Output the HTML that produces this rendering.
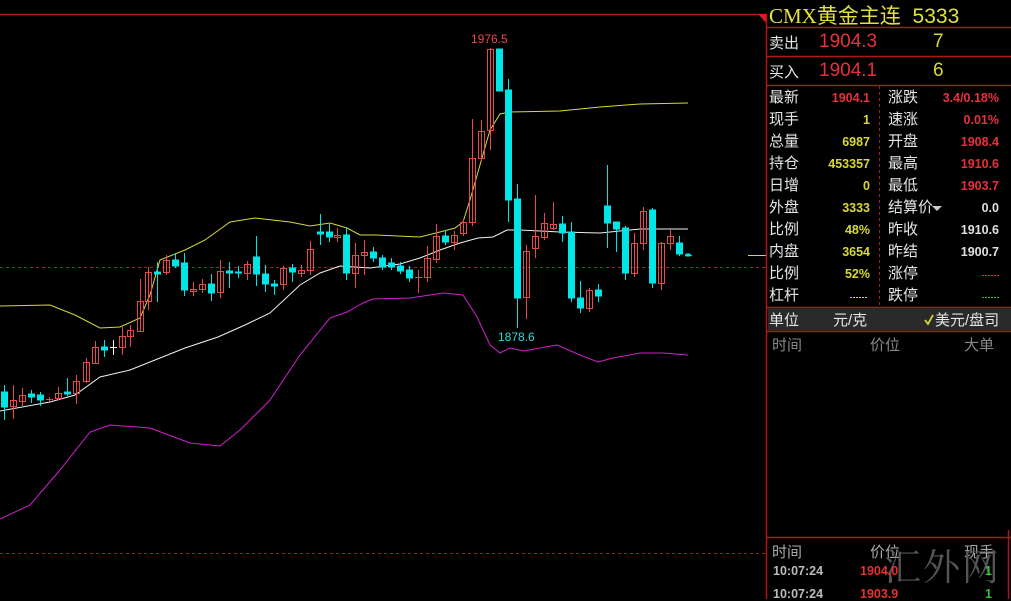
<!DOCTYPE html>
<html><head><meta charset="utf-8"><style>
body{margin:0;background:#000;width:1011px;height:599px;overflow:hidden;position:relative;font-family:"Liberation Sans","Noto Sans CJK SC",sans-serif}
.p{position:absolute;white-space:nowrap}
.l{color:#e6e6e6;font-size:15px}
.v{font-weight:bold;font-size:12.5px;text-align:right}
.y{color:#d8d838}.r{color:#e8303a}.w{color:#e0e0e0}.g{color:#888}
</style></head><body>
<svg width="1011" height="599" style="position:absolute;left:0;top:0">
<line x1="0" y1="14.5" x2="767" y2="14.5" stroke="#b01818" stroke-width="1.5"/>
<polygon points="758,14 767,14 767,24" fill="#d02020"/>
<line x1="0" y1="267.5" x2="766" y2="267.5" stroke="#9a2424" stroke-dasharray="3,3"/>
<line x1="0" y1="553.5" x2="766" y2="553.5" stroke="#9a2424" stroke-dasharray="3,3"/>
<line x1="748" y1="255.5" x2="766" y2="255.5" stroke="#d8d838"/>
<polyline fill="none" stroke="#d8d838" points="0,306 50,305 75,315 100,328 120,327 140,318 150,295 160,260 185,250 205,240 230,222 255,218 290,222 310,226 330,223 347,228 360,235 375,235 420,237 440,232 455,228 463,222 470,200 480,165 490,130 500,114 510,112 560,111 600,107 640,104 688,103"/>
<polyline fill="none" stroke="#f0f0f0" points="0,411 50,402 75,395 100,377 130,370 160,358 185,348 218,337 245,325 270,313 300,285 320,273 340,266 370,268 400,264 420,258 440,250 460,243 478,238 493,237 507,230 520,230 560,232 600,233 640,229 688,229"/>
<polyline fill="none" stroke="#d020d0" points="0,519 30,505 60,470 90,432 110,425 150,428 190,443 220,446 240,430 270,400 300,355 330,318 347,312 363,303 373,299 410,298 443,293 463,295 477,317 490,345 500,353 510,348 523,351 557,345 580,355 598,362 613,358 640,353 663,353 688,355"/>
<g stroke-width="1">
<g fill="#00e5e5" stroke="#00e5e5">
<line x1="4.5" y1="385" x2="4.5" y2="420"/><rect x="1.5" y="392" width="6" height="15"/>
<line x1="31.5" y1="390" x2="31.5" y2="403"/><rect x="28.5" y="394" width="6" height="3"/>
<line x1="40.5" y1="392" x2="40.5" y2="406"/><rect x="37.5" y="395" width="6" height="5"/>
<line x1="67.5" y1="378" x2="67.5" y2="396"/><rect x="64.5" y="392" width="6" height="2"/>
<line x1="104.5" y1="340" x2="104.5" y2="357"/><rect x="101.5" y="347" width="6" height="3"/>
<line x1="157.5" y1="262" x2="157.5" y2="302"/><rect x="154.5" y="272" width="6" height="2"/>
<line x1="175.5" y1="253" x2="175.5" y2="268"/><rect x="172.5" y="260" width="6" height="6"/>
<line x1="184.5" y1="253" x2="184.5" y2="296"/><rect x="181.5" y="263" width="6" height="27"/>
<line x1="211.5" y1="274" x2="211.5" y2="301"/><rect x="208.5" y="284" width="6" height="9"/>
<line x1="229.5" y1="262" x2="229.5" y2="288"/><rect x="226.5" y="271" width="6" height="2"/>
<line x1="238.5" y1="266" x2="238.5" y2="278"/><rect x="235.5" y="272" width="6" height="1"/>
<line x1="256.5" y1="236" x2="256.5" y2="286"/><rect x="253.5" y="257" width="6" height="17"/>
<line x1="265.5" y1="265" x2="265.5" y2="292"/><rect x="262.5" y="274" width="6" height="10"/>
<line x1="274.5" y1="280" x2="274.5" y2="295"/><rect x="271.5" y="284" width="6" height="2"/>
<line x1="292.5" y1="264" x2="292.5" y2="282"/><rect x="289.5" y="268" width="6" height="4"/>
<line x1="320.5" y1="214" x2="320.5" y2="245"/><rect x="317.5" y="232" width="6" height="2"/>
<line x1="329.5" y1="224" x2="329.5" y2="242"/><rect x="326.5" y="232" width="6" height="5"/>
<line x1="346.5" y1="228" x2="346.5" y2="280"/><rect x="343.5" y="235" width="6" height="38"/>
<line x1="373.5" y1="247" x2="373.5" y2="262"/><rect x="370.5" y="252" width="6" height="6"/>
<line x1="382.5" y1="255" x2="382.5" y2="270"/><rect x="379.5" y="258" width="6" height="9"/>
<line x1="391.5" y1="258" x2="391.5" y2="270"/><rect x="388.5" y="263" width="6" height="4"/>
<line x1="400.5" y1="262" x2="400.5" y2="274"/><rect x="397.5" y="266" width="6" height="5"/>
<line x1="409.5" y1="266" x2="409.5" y2="282"/><rect x="406.5" y="270" width="6" height="8"/>
<line x1="445.5" y1="230" x2="445.5" y2="245"/><rect x="442.5" y="236" width="6" height="6"/>
<rect x="496.5" y="49" width="6" height="42"/>
<line x1="508.5" y1="79" x2="508.5" y2="222"/><rect x="505.5" y="90" width="6" height="110"/>
<line x1="517.5" y1="184" x2="517.5" y2="328"/><rect x="514.5" y="199" width="6" height="99"/>
<line x1="562.5" y1="216" x2="562.5" y2="242"/><rect x="559.5" y="224" width="6" height="9"/>
<line x1="571.5" y1="222" x2="571.5" y2="302"/><rect x="568.5" y="232" width="6" height="66"/>
<line x1="580.5" y1="281" x2="580.5" y2="313"/><rect x="577.5" y="298" width="6" height="10"/>
<line x1="598.5" y1="284" x2="598.5" y2="302"/><rect x="595.5" y="290" width="6" height="6"/>
<line x1="607.5" y1="165" x2="607.5" y2="248"/><rect x="604.5" y="206" width="6" height="17"/>
<line x1="616.5" y1="222" x2="616.5" y2="252"/><rect x="613.5" y="222" width="6" height="7"/>
<line x1="625.5" y1="226" x2="625.5" y2="280"/><rect x="622.5" y="228" width="6" height="45"/>
<line x1="652.5" y1="208" x2="652.5" y2="288"/><rect x="649.5" y="210" width="6" height="73"/>
<line x1="679.5" y1="236" x2="679.5" y2="256"/><rect x="676.5" y="243" width="6" height="11"/>
<line x1="685" y1="255.5" x2="692" y2="255.5"/><rect x="686" y="254" width="4" height="2"/>
</g>
<g fill="none" stroke="#e84848">
<line x1="13.5" y1="385" x2="13.5" y2="419"/><rect x="10.5" y="400.5" width="6" height="6"/>
<line x1="22.5" y1="388" x2="22.5" y2="406"/><rect x="19.5" y="395.5" width="6" height="6"/>
<line x1="49.5" y1="397" x2="49.5" y2="402"/><line x1="46" y1="399.5" x2="53" y2="399.5"/>
<line x1="58.5" y1="387" x2="58.5" y2="400"/><rect x="55.5" y="393.5" width="6" height="5"/>
<line x1="76.5" y1="375" x2="76.5" y2="404"/><rect x="73.5" y="381.5" width="6" height="12"/>
<line x1="86.5" y1="358" x2="86.5" y2="383"/><rect x="83.5" y="362.5" width="6" height="19"/>
<line x1="95.5" y1="341" x2="95.5" y2="364"/><rect x="92.5" y="347.5" width="6" height="16"/>
<line x1="122.5" y1="327" x2="122.5" y2="355"/><rect x="119.5" y="336.5" width="6" height="11"/>
<line x1="130.5" y1="325" x2="130.5" y2="347"/><rect x="127.5" y="330.5" width="6" height="6"/>
<line x1="140.5" y1="279" x2="140.5" y2="332"/><rect x="137.5" y="301.5" width="6" height="30"/>
<line x1="148.5" y1="267" x2="148.5" y2="310"/><rect x="145.5" y="272.5" width="6" height="29"/>
<line x1="166.5" y1="255" x2="166.5" y2="275"/><rect x="163.5" y="260.5" width="6" height="12"/>
<line x1="193.5" y1="282" x2="193.5" y2="296"/><rect x="190.5" y="289.5" width="6" height="2"/>
<line x1="202.5" y1="279" x2="202.5" y2="293"/><rect x="199.5" y="284.5" width="6" height="5"/>
<line x1="220.5" y1="260" x2="220.5" y2="298"/><rect x="217.5" y="271.5" width="6" height="21"/>
<line x1="247.5" y1="261" x2="247.5" y2="280"/><rect x="244.5" y="264.5" width="6" height="9"/>
<line x1="283.5" y1="266" x2="283.5" y2="290"/><rect x="280.5" y="268.5" width="6" height="16"/>
<line x1="301.5" y1="265" x2="301.5" y2="277"/><rect x="298.5" y="270.5" width="6" height="3"/>
<line x1="310.5" y1="241" x2="310.5" y2="275"/><rect x="307.5" y="249.5" width="6" height="21"/>
<line x1="337.5" y1="228" x2="337.5" y2="242"/><rect x="334.5" y="235.5" width="6" height="2"/>
<line x1="355.5" y1="243" x2="355.5" y2="288"/><rect x="352.5" y="255.5" width="6" height="18"/>
<line x1="364.5" y1="240" x2="364.5" y2="275"/><rect x="361.5" y="252.5" width="6" height="3"/>
<line x1="418.5" y1="270" x2="418.5" y2="293"/><line x1="415" y1="277.5" x2="422" y2="277.5"/>
<line x1="427.5" y1="246" x2="427.5" y2="282"/><rect x="424.5" y="258.5" width="6" height="19"/>
<line x1="436.5" y1="224" x2="436.5" y2="263"/><rect x="433.5" y="236.5" width="6" height="23"/>
<line x1="454.5" y1="231" x2="454.5" y2="250"/><rect x="451.5" y="235.5" width="6" height="7"/>
<line x1="463.5" y1="219" x2="463.5" y2="236"/><rect x="460.5" y="222.5" width="6" height="11"/>
<line x1="472.5" y1="119" x2="472.5" y2="226"/><rect x="469.5" y="158.5" width="6" height="64"/>
<line x1="481.5" y1="120" x2="481.5" y2="161"/><rect x="478.5" y="131.5" width="6" height="27"/>
<line x1="490.5" y1="48" x2="490.5" y2="150"/><rect x="487.5" y="49.5" width="6" height="81"/>
<line x1="526.5" y1="245" x2="526.5" y2="319"/><rect x="523.5" y="251.5" width="6" height="46"/>
<line x1="535.5" y1="195" x2="535.5" y2="258"/><rect x="532.5" y="236.5" width="6" height="12"/>
<line x1="544.5" y1="213" x2="544.5" y2="240"/><rect x="541.5" y="223.5" width="6" height="14"/>
<line x1="553.5" y1="202" x2="553.5" y2="230"/><rect x="550.5" y="224.5" width="6" height="4"/>
<line x1="589.5" y1="288" x2="589.5" y2="312"/><rect x="586.5" y="290.5" width="6" height="18"/>
<line x1="634.5" y1="233" x2="634.5" y2="277"/><rect x="631.5" y="243.5" width="6" height="30"/>
<line x1="643.5" y1="207" x2="643.5" y2="250"/><rect x="640.5" y="211.5" width="6" height="32"/>
<line x1="661.5" y1="242" x2="661.5" y2="290"/><rect x="658.5" y="243.5" width="6" height="40"/>
<line x1="670.5" y1="230" x2="670.5" y2="250"/><rect x="667.5" y="236.5" width="6" height="7"/>
</g>
<g stroke="#fff"><line x1="113.5" y1="340" x2="113.5" y2="355"/><line x1="110" y1="347.5" x2="117" y2="347.5"/></g>
</g>
<text x="471" y="43" fill="#e84848" font-family="Liberation Sans" font-size="12">1976.5</text>
<text x="498" y="341" fill="#30d8d8" font-family="Liberation Sans" font-size="12">1878.6</text>
<line x1="766.5" y1="14" x2="766.5" y2="599" stroke="#b01818" stroke-width="1.5"/>
<g stroke="#b01818" stroke-width="1.5">
<line x1="767" y1="27.5" x2="1011" y2="27.5"/>
<line x1="767" y1="56.5" x2="1011" y2="56.5"/>
<line x1="767" y1="85.5" x2="1011" y2="85.5"/>
<line x1="767" y1="307.5" x2="1011" y2="307.5"/>
<line x1="767" y1="331.5" x2="1011" y2="331.5"/>
<line x1="767" y1="537.5" x2="1011" y2="537.5"/>
<line x1="1008.5" y1="530" x2="1008.5" y2="599"/>
</g>
<rect x="768" y="308.5" width="243" height="22" fill="#2a2a2a"/>
<line x1="879.5" y1="86" x2="879.5" y2="306" stroke="#a02020" stroke-dasharray="3,3"/>
<line x1="982" y1="275.5" x2="999" y2="275.5" stroke="#e03030" stroke-dasharray="2,1"/>
<line x1="982" y1="297.5" x2="999" y2="297.5" stroke="#30c030" stroke-dasharray="2,1"/>
<line x1="850" y1="297.5" x2="868" y2="297.5" stroke="#d8d838" stroke-dasharray="2,1"/>
<polygon points="932,206 942,206 937,211" fill="#ccc"/>
<path d="M925,320 L928,324 L933,315" stroke="#d8d838" stroke-width="1.8" fill="none"/>
</svg>
<div class="p" style="left:769px;top:0px;font-size:21px;color:#e0e040"><span style="font-family:'Liberation Serif',serif">CMX</span><span style="font-family:'Noto Sans CJK SC',sans-serif">黄金主连</span>&nbsp;&nbsp;<span style="font-family:'Liberation Sans',sans-serif">5333</span></div>
<div class="p l" style="left:769px;top:32px">卖出</div>
<div class="p r" style="left:819px;top:31px;font-size:19px">1904.3</div>
<div class="p y" style="left:933px;top:31px;font-size:19px">7</div>
<div class="p l" style="left:769px;top:61px">买入</div>
<div class="p r" style="left:819px;top:60px;font-size:19px">1904.1</div>
<div class="p y" style="left:933px;top:60px;font-size:19px">6</div>
<div class="p" style="left:769px;top:87px;line-height:22px;width:110px">
<div class="l">最新</div><div class="l">现手</div><div class="l">总量</div><div class="l">持仓</div><div class="l">日增</div><div class="l">外盘</div><div class="l">比例</div><div class="l">内盘</div><div class="l">比例</div><div class="l">杠杆</div></div>
<div class="p v" style="left:800px;top:87px;line-height:22px;width:70px">
<div class="r">1904.1</div><div class="y">1</div><div class="y">6987</div><div class="y">453357</div><div class="y">0</div><div class="y">3333</div><div class="y">48%</div><div class="y">3654</div><div class="y">52%</div><div>&nbsp;</div></div>
<div class="p" style="left:888px;top:87px;line-height:22px">
<div class="l">涨跌</div><div class="l">速涨</div><div class="l">开盘</div><div class="l">最高</div><div class="l">最低</div><div class="l">结算价</div><div class="l">昨收</div><div class="l">昨结</div><div class="l">涨停</div><div class="l">跌停</div></div>
<div class="p v" style="left:919px;top:87px;line-height:22px;width:80px">
<div class="r">3.4/0.18%</div><div class="r">0.01%</div><div class="r">1908.4</div><div class="r">1910.6</div><div class="r">1903.7</div><div class="w">0.0</div><div class="w">1910.6</div><div class="w">1900.7</div><div>&nbsp;</div><div>&nbsp;</div></div>
<div class="p l" style="left:769px;top:309px">单位</div>
<div class="p l" style="left:833px;top:309px">元/克</div>
<div class="p l" style="left:935px;top:309px">美元/盘司</div>
<div class="p g" style="left:772px;top:334px;font-size:15px">时间</div>
<div class="p g" style="left:870px;top:334px;font-size:15px">价位</div>
<div class="p g" style="left:964px;top:334px;font-size:15px">大单</div>
<div class="p g" style="left:772px;top:541px;font-size:15px;color:#aaa">时间</div>
<div class="p g" style="left:870px;top:541px;font-size:15px;color:#aaa">价位</div>
<div class="p g" style="left:964px;top:541px;font-size:15px;color:#aaa">现手</div>
<div class="p" style="left:884px;top:540px;font-size:37px;line-height:48px;color:#555;font-family:'Noto Serif CJK SC',serif;letter-spacing:2px">汇外网</div>
<div class="p" style="left:773px;top:564px;font-size:12.5px;font-weight:bold;color:#bbb">10:07:24</div>
<div class="p" style="left:860px;top:564px;font-size:12.5px;font-weight:bold;color:#e83030">1904.0</div>
<div class="p" style="left:985px;top:564px;font-size:12.5px;font-weight:bold;color:#30c030">1</div>
<div class="p" style="left:773px;top:587px;font-size:12.5px;font-weight:bold;color:#bbb">10:07:24</div>
<div class="p" style="left:860px;top:587px;font-size:12.5px;font-weight:bold;color:#e83030">1903.9</div>
<div class="p" style="left:985px;top:587px;font-size:12.5px;font-weight:bold;color:#30c030">1</div>
</body></html>
